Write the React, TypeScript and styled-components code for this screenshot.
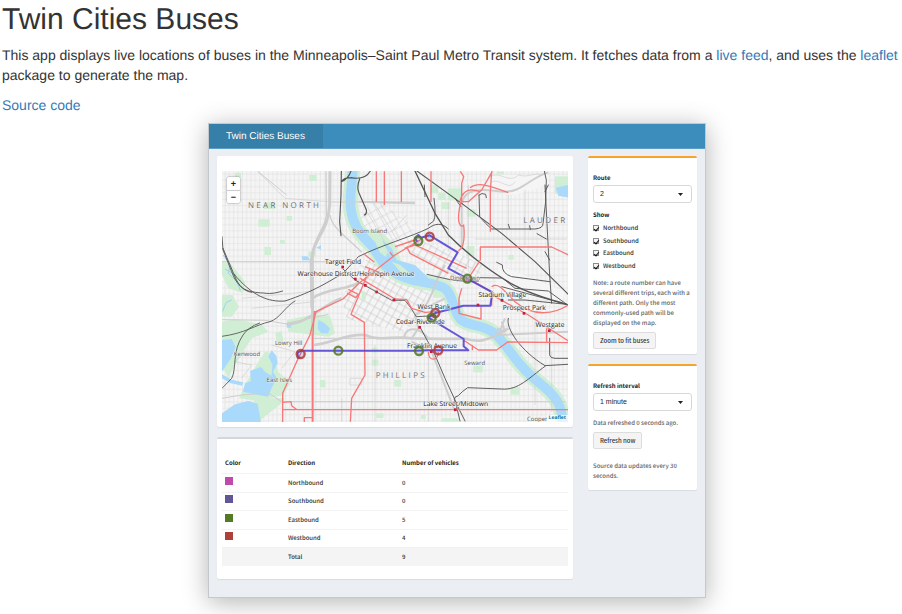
import React, { useState } from "react";
import styled, { createGlobalStyle, css } from "styled-components";

const UI_FONT = `"Noto Sans CJK SC", "Open Sans", sans-serif`;
const TEXT_FONT = `"Liberation Sans", Arial, sans-serif`;

const GlobalStyle = createGlobalStyle`
  *, *::before, *::after { box-sizing: border-box; }
  body {
    margin: 0;
    background: #fff;
    color: #333;
    font: 14px/20px ${TEXT_FONT};
    text-rendering: geometricPrecision;
  }
`;

const Page = styled.main`
  padding: 3px 2px 16px;
  overflow: hidden;
`;

const Title = styled.h1`
  margin: 0 0 9px;
  font-size: 30px;
  line-height: 33px;
  font-weight: 400;
`;

const Paragraph = styled.p`
  margin: 0 0 10px;
`;

const Link = styled.a`
  color: #337ab7;
  text-decoration: none;
`;

const Stage = styled.div`
  display: flex;
  justify-content: center;
  padding-left: 12px;
  margin-top: -2px;
`;

const Frame = styled.section`
  flex: 0 1 498px;
  border: 1px solid #c4c8cc;
  background: #ebeff4;
  box-shadow: 0 4px 24px rgba(0, 0, 0, 0.3);
`;

const Header = styled.header`
  display: flex;
  height: 25px;
  background: #3c8dbc;
  border-bottom: 1px solid #5a9dc6;
`;

const Logo = styled.span`
  display: flex;
  align-items: center;
  padding: 1px 18px 0 17px;
  background: #367fa9;
  color: #fff;
  font-size: 10px;
  line-height: 12px;
`;

const Columns = styled.div`
  display: flex;
  align-items: flex-start;
  gap: 15px;
  padding: 7px 8px 18px;
`;

const MainColumn = styled.div`
  display: flex;
  flex-direction: column;
  flex: 1;
  min-width: 0;
  gap: 10px;
`;

const SideColumn = styled.div`
  display: flex;
  flex-direction: column;
  flex: 0 0 109px;
  gap: 10px;
`;

const Card = styled.section<{ $accent?: string }>`
  padding: 14px 5px 5px;
  background: #fff;
  border-top: ${(p) => (p.$accent ? `2px solid ${p.$accent}` : "1px solid #fff")};
  border-radius: 2px;
  box-shadow: 0 1px 1px rgba(0, 0, 0, 0.08);
  color: #444;
  font-family: ${UI_FONT};
  font-size: 6px;
  font-weight: 500;
  line-height: 10px;
`;

const TableCard = styled(Card)`
  padding-bottom: 13px;
`;

const ControlCard = styled(Card)`
  padding-top: 15px;
`;

const MapBox = styled.div`
  position: relative;
  overflow: hidden;
`;

const MapDrawing = styled.svg`
  display: block;
  width: 100%;
  height: 251px;
`;

const ZoomControl = styled.div`
  position: absolute;
  top: 6px;
  left: 5px;
  display: flex;
  flex-direction: column;
  border-radius: 2px;
  box-shadow: 0 0 2px rgba(0, 0, 0, 0.55);
`;

const ZoomButton = styled.button`
  width: 13px;
  height: 13px;
  padding: 0;
  border: 0;
  border-radius: 2px;
  background: #fff;
  color: #222;
  font: bold 9px/12px ${TEXT_FONT};
  & + & {
    border-top: 1px solid #ccc;
    border-radius: 0 0 2px 2px;
  }
`;

const Attribution = styled.a`
  position: absolute;
  right: 0;
  bottom: 0;
  padding: 0 2px;
  background: rgba(255, 255, 255, 0.7);
  color: #0078a8;
  font: bold 5px/7px "Open Sans", sans-serif;
  text-decoration: none;
`;

const PlaceLabel = styled.text<{ $kind: "station" | "area" | "district" }>`
  font-family: "Open Sans", "Noto Sans", sans-serif;
  text-anchor: middle;
  paint-order: stroke;
  stroke: #f6f6f6;
  stroke-linejoin: round;
  ${(p) =>
    p.$kind === "station"
      ? css`
          font-size: 20px;
          font-weight: 500;
          fill: #111;
          stroke-width: 3px;
        `
      : p.$kind === "area"
        ? css`
            font-size: 18px;
            fill: #505050;
            stroke-width: 2px;
          `
        : css`
            font-size: 24px;
            letter-spacing: 7px;
            fill: #707070;
            stroke-width: 1px;
          `}
`;

const VehicleTable = styled.table`
  width: 100%;
  border-collapse: collapse;
  table-layout: fixed;
  color: #333;
`;

const ColorHead = styled.th`
  width: 63px;
`;

const DirectionHead = styled.th`
  width: 114px;
`;

const HeadRow = styled.tr`
  height: 20px;
  th {
    padding: 1px 3px 0;
    color: #222;
    text-align: left;
    font-weight: 700;
  }
`;

const Row = styled.tr<{ $total?: boolean }>`
  height: 19px;
  border-top: 1px solid #f2f2f2;
  background: ${(p) => (p.$total ? "#f4f4f4" : "transparent")};
  &:nth-child(even) {
    height: 18px;
  }
  td {
    padding: 0 3px;
  }
`;

const Swatch = styled.span<{ $color: string }>`
  display: block;
  width: 8px;
  height: 8px;
  margin-bottom: 4px;
  background: ${(p) => p.$color};
`;

const FieldLabel = styled.label`
  display: block;
  margin-bottom: 2px;
  color: #222;
  font-weight: 700;
`;

const SelectBox = styled.div`
  position: relative;
  margin-bottom: 7px;
`;

const Select = styled.select`
  display: block;
  width: 100%;
  height: 18px;
  padding: 0 6px;
  appearance: none;
  border: 1px solid #d8d8d8;
  border-radius: 3px;
  background: #fff;
  color: #222;
  font: 7px/10px ${TEXT_FONT};
`;

const Caret = styled.svg`
  position: absolute;
  top: 8px;
  right: 9px;
  width: 5px;
  height: 3px;
  pointer-events: none;
`;

const Group = styled.fieldset`
  margin: 0;
  padding: 0;
  border: 0;
`;

const Legend = styled.legend`
  padding: 0;
  color: #222;
  font-weight: 700;
`;

const Choices = styled.div`
  display: grid;
  grid-auto-rows: 1fr;
  height: 50px;
  margin: 2px 0 6px;
`;

const Choice = styled.label`
  display: flex;
  align-items: center;
  gap: 4px;
  color: #333;
`;

const Check = styled.input`
  display: grid;
  place-items: center;
  width: 6px;
  height: 6px;
  margin: 0;
  appearance: none;
  border: 1px solid #8c8c8c;
  background: #f4f4f4;
  &:checked::after {
    content: "";
    width: 3px;
    height: 5px;
    margin-bottom: 2px;
    border: solid #111;
    border-width: 0 1px 1px 0;
    transform: rotate(40deg);
  }
`;

const Help = styled.p`
  margin: 0 0 4px;
  color: #666;
`;

const Button = styled.button`
  display: block;
  height: 17px;
  padding: 0 6px;
  border: 1px solid #ddd;
  border-radius: 2px;
  background: #f4f4f4;
  color: #333;
  font: 500 6px/10px ${UI_FONT};
`;

const SpacedHelp = styled(Help)`
  margin-top: 12px;
`;

type Kind = "station" | "area" | "district";

const labels: [string, number, number, Kind][] = [
  ["NEAR NORTH", 209, 130, "district"],
  ["LAUDER", 991, 174, "district"],
  ["PHILLIPS", 559, 640, "district"],
  ["Boom Island", 464, 205, "area"],
  ["Dinkytown", 750, 344, "area"],
  ["Lowry Hill", 221, 539, "area"],
  ["Kenwood", 96, 572, "area"],
  ["East Isles", 193, 652, "area"],
  ["Seward", 779, 599, "area"],
  ["Cooper", 967, 767, "area"],
  ["Target Field", 384, 296, "station"],
  ["Warehouse District/Hennepin Avenue", 423, 332, "station"],
  ["Stadium Village", 862, 397, "station"],
  ["West Bank", 657, 432, "station"],
  ["Prospect Park", 928, 435, "station"],
  ["Cedar-Riverside", 616, 476, "station"],
  ["Westgate", 1005, 487, "station"],
  ["Franklin Avenue", 651, 548, "station"],
  ["Lake Street/Midtown", 722, 724, "station"],
];

const stations: [number, number][] = [
  [384, 307], [422, 343], [452, 362], [486, 382], [538, 406], [615, 488],
  [790, 421], [862, 407], [928, 446], [1004, 498], [722, 735], [650, 561],
];

const parks: [number, number, number, number][] = [
  [148, 112, 32, 20], [130, 163, 34, 22], [215, 153, 16, 14], [148, 246, 20, 24],
  [195, 225, 14, 12], [283, 30, 22, 18], [280, 260, 22, 15], [60, 23, 18, 14],
  [670, 83, 22, 22], [646, 60, 24, 24], [698, 70, 40, 36], [680, 112, 24, 20],
  [755, 133, 26, 22], [1020, 34, 40, 52], [655, 358, 32, 40], [754, 243, 24, 30],
  [470, 548, 18, 15], [470, 584, 20, 18], [315, 645, 16, 22], [538, 645, 20, 20],
  [775, 602, 28, 20], [886, 667, 28, 22], [483, 745, 22, 14], [680, 760, 50, 10],
  [440, 380, 12, 26], [880, 270, 16, 14], [845, 20, 22, 8], [618, 750, 14, 12],
];

const buses: [number, number, string][] = [
  [610, 228, "#4f7a1e"], [644, 215, "#b03a36"], [757, 341, "#4f7a1e"],
  [661, 444, "#b03a36"], [650, 458, "#4f7a1e"], [257, 567, "#b03a36"],
  [370, 557, "#4f7a1e"], [612, 558, "#4f7a1e"], [670, 556, "#b03a36"],
];

const RIVER =
  "M413 10C412 60 402 95 408 135C413 175 432 205 462 233C494 264 502 305 552 330C600 356 660 348 692 372C718 398 713 440 738 464C762 486 800 474 840 506C876 540 896 580 928 612C962 652 1002 668 1026 708C1040 730 1042 755 1045 780";

function TransitMap() {
  return (
    <MapDrawing viewBox="21 18 1038 753" preserveAspectRatio="xMidYMid slice" role="img" aria-label="Map of buses on route 2">
      <defs>
        <pattern id="blocks" width="26" height="38" patternUnits="userSpaceOnUse">
          <path d="M4 0V38M17 0V38M0 8H26M0 27H26" stroke="#dedede" strokeWidth="1.8" fill="none" />
        </pattern>
        <pattern id="downtown" width="20" height="22" patternUnits="userSpaceOnUse" patternTransform="rotate(29)">
          <path d="M5 0V22M0 8H20" stroke="#c8c8c8" strokeWidth="2" fill="none" />
        </pattern>
        <pattern id="northeast" width="20" height="26" patternUnits="userSpaceOnUse" patternTransform="rotate(-28)">
          <path d="M5 0V26M0 8H20" stroke="#d4d4d4" strokeWidth="2" fill="none" />
        </pattern>
      </defs>
      <rect x="0" y="0" width="1080" height="790" fill="#f5f5f5" />
      <rect x="0" y="0" width="1080" height="790" fill="url(#blocks)" />

      <g fill="#f5f5f5">
        <path d="M436 300L480 262L640 380L600 470L560 500L396 462L380 400Z" />
        <path d="M425 160L470 110L590 180L600 225L530 260L480 225Z" />
        <path d="M560 240L600 222L740 270L800 300L790 360L700 350Z" />
        <path d="M820 30H1000V60L900 90L830 80ZM850 300L1050 380L1040 410L840 380Z" />
      </g>
      <path d="M436 300L480 262L640 380L600 470L560 500L396 462L380 400Z" fill="url(#downtown)" />
      <path d="M425 160L480 100L590 180L600 225L530 260L480 225Z" fill="url(#northeast)" />
      <path d="M560 240L600 222L740 270L800 300L790 360L700 350Z" fill="url(#downtown)" />

      <g fill="#d0eed3">
        {parks.map(([x, y, w, h]) => (
          <rect key={`${x}-${y}`} x={x} y={y} width={w} height={h} />
        ))}
        <path d="M21 390H52L72 425L50 455H21ZM21 470L60 462L140 478L160 500L110 520L60 600L40 640L21 600Z" />
        <path d="M215 465L300 448L345 452L360 505L340 515L220 500ZM180 505L200 498L205 525L190 545Z" />
        <path d="M90 660L130 590L150 560L172 565L190 620L225 655L205 690L130 708L72 700Z" />
        <path d="M118 700L210 700L200 715L130 770H110ZM21 288L50 300L90 350L85 385L40 370L21 330Z" />
        <path d="M440 190L500 200L540 240L560 290L500 290L460 240Z" />
      </g>
      <path d={RIVER} fill="none" stroke="#d0eed3" strokeWidth="46" />
      <g fill="#a9dafb">
        <path d="M462 222L500 240L530 280L560 322L610 348L600 362L540 340L500 312L470 268Z" />
        <path d="M500 225L530 250L545 285L600 300L640 338L600 340L540 300Z" />
        <path d="M105 618L138 606L152 622L170 632L172 598L160 575L170 556L184 572L188 594L174 620L186 640L170 668L160 695L130 690L84 680L90 655L108 648Z" />
        <path d="M21 525L50 522L62 545L48 580L21 620Z" />
        <path d="M21 745L60 718L100 708L128 716L138 771H21ZM21 628L50 644L84 652L82 662L46 654L21 640Z" />
        <path d="M310 465L328 474L345 490L340 505L318 505L308 490ZM214 475H228V488H216ZM1022 68L1060 60V98L1030 92Z" />
        <path d="M260 274H278L286 286H262ZM304 248L318 240V254ZM860 372L866 410L856 408Z" />
      </g>
      <path d={RIVER} fill="none" stroke="#a9dafb" strokeWidth="29" />
      <path d="M478 225L500 236L518 262L512 276L494 262ZM530 290L556 300L590 330L560 325Z" fill="#d0eed3" />
      <path d="M24 270L46 298L40 325L66 350L76 376M30 312L62 330M22 440L34 412L50 405" fill="none" stroke="#9dd2f7" strokeWidth="3" />

      <g fill="none" stroke="#cecece" strokeWidth="4" strokeLinejoin="round">
        <path d="M341 111H600M21 290H400M21 464L150 466L210 476L340 448M128 19L215 90M290 520H560M21 700L80 690L160 684L200 710H1050" strokeWidth="3" />
        <path d="M128 19L190 80L210 100L340 110M780 222H1055M760 60V320M880 90V190M930 75V240M700 110V260M575 150L530 200M640 130V220" strokeWidth="2" />
        <path d="M345 19L344 120C340 200 294 220 292 280L293 500C292 580 293 680 293 770" strokeWidth="9" />
        <path d="M333 19L334 150C332 190 292 220 286 290L288 430" />
        <path d="M345 150C350 190 400 220 440 262" />
        <path d="M293 400C330 370 400 375 432 352M215 478C280 476 320 420 380 400M288 540C340 540 390 505 450 510C490 530 540 512 590 520C640 520 700 524 745 520C780 528 800 540 880 490" strokeWidth="8" />
        <path d="M432 110L600 115M590 520L610 490L600 450C630 440 650 390 668 340L690 300M740 250V120C744 70 800 70 860 80C920 85 940 40 1000 22M846 490L870 500L860 470M610 440L690 400M870 460L850 510L1060 500" strokeWidth="6" />
        <path d="M80 400L280 380M110 430L300 410M450 130L520 250M475 110L550 230M480 540V770M640 560V770M405 640L440 640V660H405ZM960 440V720M1010 560V740M380 700V770" strokeWidth="2" />
        <path d="M820 40C850 10 880 60 910 30C940 40 960 20 980 30M830 50C860 40 880 80 900 50M90 560L60 590L110 600L80 640M170 540L240 560L200 610" strokeWidth="2" />
        <path d="M570 520C560 500 600 470 640 520M590 530L650 560L720 740" strokeWidth="6" />
      </g>

      <g fill="none" stroke="#545454" strokeWidth="2.8" strokeLinejoin="round" strokeLinecap="round">
        <path d="M379 18L378 90L374 170L378 212M379 50Q386 38 408 38M408 18Q400 42 379 50M408 38Q450 46 466 18M434 42Q424 66 432 84L454 134Q456 148 448 150" strokeWidth="3.4" />
        <path d="M21 215L24 255L50 320C70 375 100 382 145 384C170 388 190 382 203 378M24 250L56 326C66 350 78 378 110 382M56 326C110 392 160 412 210 408C300 378 340 350 384 325L430 275C500 240 590 215 640 190C660 175 680 172 700 192" />
        <path d="M21 514C90 505 120 480 165 470C195 460 210 425 240 408M21 670L50 640C66 610 50 560 84 510Q100 486 134 474" strokeWidth="2.6" />
        <path d="M600 18L660 145L700 210C760 270 840 330 900 362S1000 400 1060 420" strokeWidth="4" />
        <path d="M606 18L740 115L860 205L960 290L1060 388" strokeWidth="3.2" />
        <path d="M628 60L630 95M657 100Q664 150 656 168L640 180M720 100L738 125M636 328C690 340 720 352 790 348M790 338L860 339" />
        <path d="M792 90Q800 82 812 88L814 98M792 90L794 155Q810 175 830 192H960Q984 190 984 176L992 110L994 45L988 18M990 60L1004 330L1010 415M944 182L946 194M880 178L884 190M1000 60L990 80M966 206L994 222M990 260L1004 285" />
        <path d="M845 292L862 300Q860 325 890 335L1005 350M866 342L900 370L1000 378L1055 418M880 405H930L1055 418M860 365L1055 418" />
        <path d="M880 460C870 490 920 560 990 602L1058 598M990 604C940 640 910 676 860 672L758 668Q740 680 730 692Q716 696 718 704L750 768M616 488L660 570L690 640L720 705L735 768M1004 520V570Q1006 580 1020 580H1058" />
        <path d="M384 312L420 345L530 406H570Q590 430 604 455L660 452" strokeWidth="2.6" />
      </g>

      <g fill="none" stroke="#f77878" strokeWidth="4" strokeLinejoin="round">
        <path d="M484 19V111M508 19V120M559 19V111M648 19V111" />
        <path d="M736 19L746 35L740 55V110H760L800 75L832 19M830 19L826 80V200M738 110C720 180 740 190 746 180C750 220 745 250 730 258M735 108C745 70 770 70 795 80M765 68C790 50 820 60 880 83" />
        <path d="M795 246H1010L1060 270M796 246V285L760 340M203 771V685L245 590L285 510L303 440L384 402L432 355L540 270L620 222M568 250L600 240L755 310M575 245L585 265L700 325M540 245L600 225M525 262L535 275" />
        <path d="M293 770V520L298 440H303M268 771V758H293V520M203 712L228 710L230 722L246 734M203 734H1059" />
        <path d="M448 268L478 292M465 310L408 448L448 472L450 630L410 700L406 770M400 373L430 388L422 398L396 384M450 305L500 325M436 340L540 402L575 404L590 430L630 442L665 440" />
        <path d="M732 340L780 352L830 380V422M740 370L732 400V445L798 462V424M830 365C850 350 870 380 900 410C960 460 1020 445 1060 420M840 395L940 450L1060 528M995 490V533M745 525L790 555H845L878 531L1060 533M772 540V556M640 560C640 590 670 590 670 560" />
      </g>

      <g fill="none" stroke="#5546d2" strokeWidth="6" strokeLinejoin="round" opacity="0.9">
        <path d="M606 230L600 218L610 210L618 218L644 211L728 262L700 310L757 341L832 382L826 422H745L661 444L640 458L746 522V544L760 556H640L600 557H262L248 562V578H256" />
      </g>
      {stations.map(([x, y]) => (
        <path key={`${x}-${y}`} d={`M${x - 5} ${y - 5}h8v8h-8z`} fill="#c21f39" />
      ))}
      {labels.map(([name, x, y, kind]) => (
        <PlaceLabel key={name} x={x} y={y} $kind={kind}>
          {name}
        </PlaceLabel>
      ))}
      {buses.map(([x, y, color]) => (
        <circle key={`${x}-${y}`} cx={x} cy={y} r="12" fill="#5546d2" fillOpacity="0.15" stroke={color} strokeOpacity="0.85" strokeWidth="7" />
      ))}
    </MapDrawing>
  );
}

const directions = [
  { name: "Northbound", color: "#c04aac", count: 0 },
  { name: "Southbound", color: "#605796", count: 0 },
  { name: "Eastbound", color: "#547a26", count: 5 },
  { name: "Westbound", color: "#ae3f39", count: 4 },
];

function Dropdown({ id, options }: { id: string; options: string[] }) {
  return (
    <SelectBox>
      <Select id={id} defaultValue={options[0]}>
        {options.map((option) => (
          <option key={option}>{option}</option>
        ))}
      </Select>
      <Caret viewBox="0 0 5 3" aria-hidden="true">
        <path d="M0 0H5L2.5 3Z" fill="#222" />
      </Caret>
    </SelectBox>
  );
}

export default function App() {
  const [shown, setShown] = useState(directions.map(() => true));
  const toggle = (index: number) => setShown(shown.map((on, i) => (i === index ? !on : on)));

  return (
    <>
      <GlobalStyle />
      <Page>
        <Title>Twin Cities Buses</Title>
        <Paragraph>
          This app displays live locations of buses in the Minneapolis–Saint Paul Metro Transit system. It fetches data
          from a <Link href="#feed">live feed</Link>, and uses the <Link href="#leaflet">leaflet</Link> package to
          generate the map.
        </Paragraph>
        <Paragraph>
          <Link href="#source">Source code</Link>
        </Paragraph>
        <Stage>
          <Frame>
            <Header>
              <Logo>Twin Cities Buses</Logo>
            </Header>
            <Columns>
              <MainColumn>
                <Card>
                  <MapBox>
                    <TransitMap />
                    <ZoomControl>
                      <ZoomButton aria-label="Zoom in">+</ZoomButton>
                      <ZoomButton aria-label="Zoom out">−</ZoomButton>
                    </ZoomControl>
                    <Attribution href="#leaflet">Leaflet</Attribution>
                  </MapBox>
                </Card>
                <TableCard $accent="#d2d6de">
                  <VehicleTable>
                    <thead>
                      <HeadRow>
                        <ColorHead scope="col">Color</ColorHead>
                        <DirectionHead scope="col">Direction</DirectionHead>
                        <th scope="col">Number of vehicles</th>
                      </HeadRow>
                    </thead>
                    <tbody>
                      {directions.map((d) => (
                        <Row key={d.name}>
                          <td>
                            <Swatch $color={d.color} />
                          </td>
                          <td>{d.name}</td>
                          <td>{d.count}</td>
                        </Row>
                      ))}
                      <Row $total>
                        <td />
                        <td>Total</td>
                        <td>9</td>
                      </Row>
                    </tbody>
                  </VehicleTable>
                </TableCard>
              </MainColumn>
              <SideColumn>
                <ControlCard $accent="#f5a52b">
                  <FieldLabel htmlFor="route">Route</FieldLabel>
                  <Dropdown id="route" options={["2", "3", "4"]} />
                  <Group>
                    <Legend>Show</Legend>
                    <Choices>
                      {directions.map((d, i) => (
                        <Choice key={d.name}>
                          <Check type="checkbox" checked={shown[i]} onChange={() => toggle(i)} />
                          {d.name}
                        </Choice>
                      ))}
                    </Choices>
                  </Group>
                  <Help>
                    Note: a route number can have several different trips, each with a different path. Only the most
                    commonly-used path will be displayed on the map.
                  </Help>
                  <Button>Zoom to fit buses</Button>
                </ControlCard>
                <ControlCard $accent="#f5a52b">
                  <FieldLabel htmlFor="interval">Refresh interval</FieldLabel>
                  <Dropdown id="interval" options={["1 minute", "2 minutes", "5 minutes"]} />
                  <Help>Data refreshed 0 seconds ago.</Help>
                  <Button>Refresh now</Button>
                  <SpacedHelp>Source data updates every 30 seconds.</SpacedHelp>
                </ControlCard>
              </SideColumn>
            </Columns>
          </Frame>
        </Stage>
      </Page>
    </>
  );
}
